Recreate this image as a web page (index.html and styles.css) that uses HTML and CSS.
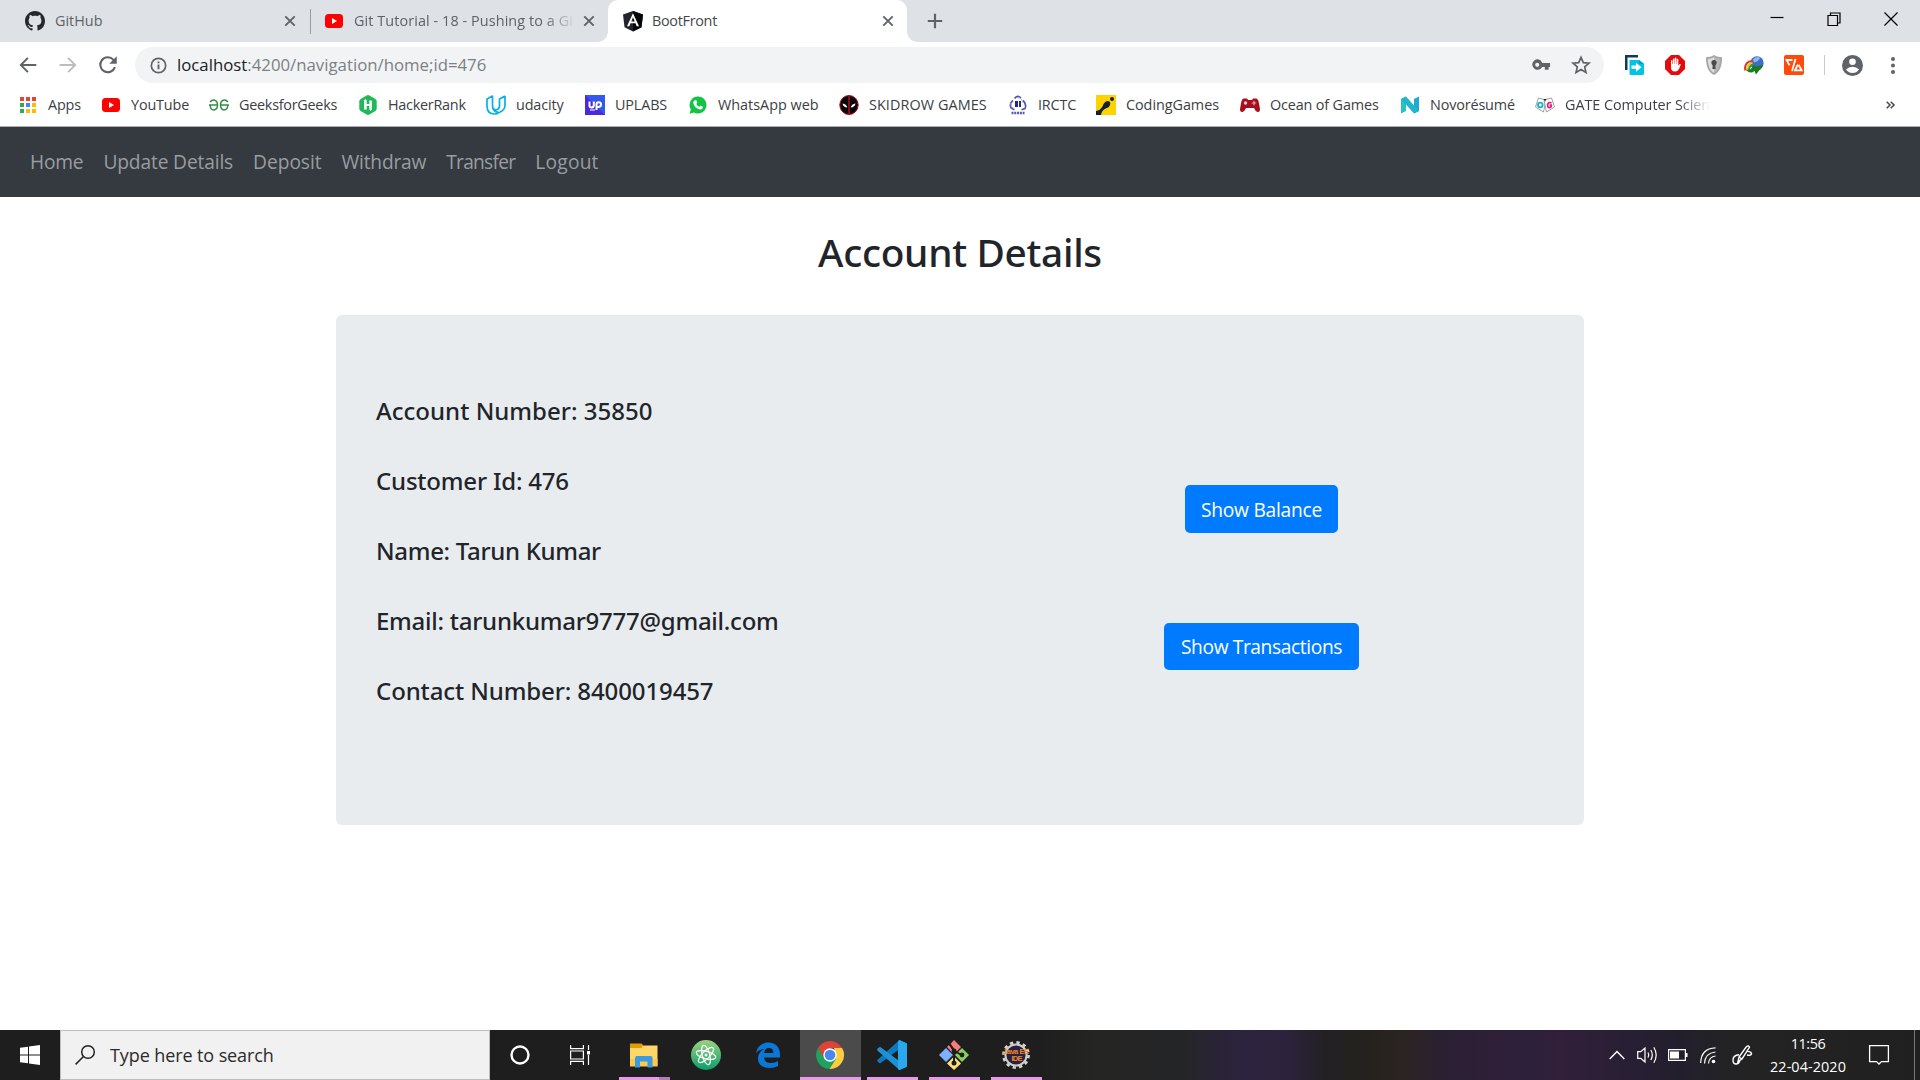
FILE: index.html
```html
<!DOCTYPE html>
<html lang="en">
<head>
<meta charset="utf-8">
<title>BootFront</title>
<link rel="stylesheet" href="styles.css">
</head>
<body>
<header class="browser">
  <div class="tabstrip">
    <div class="tab tab-github">
      <svg class="i20" viewBox="0 0 16 16"><path fill="#24292e" d="M8 0C3.58 0 0 3.58 0 8c0 3.54 2.29 6.53 5.47 7.59.4.07.55-.17.55-.38 0-.19-.01-.82-.01-1.49-2.01.37-2.53-.49-2.69-.94-.09-.23-.48-.94-.82-1.13-.28-.15-.68-.52-.01-.53.63-.01 1.08.58 1.23.82.72 1.21 1.87.87 2.33.66.07-.52.28-.87.51-1.07-1.78-.2-3.64-.89-3.64-3.95 0-.87.31-1.59.82-2.15-.08-.2-.36-1.02.08-2.12 0 0 .67-.21 2.2.82.64-.18 1.32-.27 2-.27s1.36.09 2 .27c1.53-1.04 2.2-.82 2.2-.82.44 1.1.16 1.92.08 2.12.51.56.82 1.27.82 2.15 0 3.07-1.87 3.75-3.65 3.95.29.25.54.73.54 1.48 0 1.07-.01 1.93-.01 2.2 0 .21.15.46.55.38A8 8 0 0 0 16 8c0-4.42-3.58-8-8-8z"/></svg>
      <span class="tab-title">GitHub</span>
      <svg class="close" viewBox="0 0 12 12"><path d="M1.3 1.3l9.4 9.4M10.700 1.300l-9.400 9.400"/></svg>
    </div>
    <div class="tab tab-video">
      <svg class="i20" viewBox="0 0 20 20"><rect x="1" y="3" width="18" height="14" rx="3.500" fill="#f00"/><path fill="#fff" d="M8 7l5 3-5 3z"/></svg>
      <span class="tab-title fade">Git Tutorial - 18 - Pushing to a Gi</span>
      <svg class="close" viewBox="0 0 12 12"><path d="M1.3 1.3l9.4 9.4M10.700 1.300l-9.400 9.400"/></svg>
    </div>
    <div class="tab tab-active">
      <svg class="i20" viewBox="0 0 20 20"><path fill="#23252d" d="M10 0l10 3.400-1.500 12.800L10 20.500 1.500 16.200 0 3.400z"/><path fill="#05060a" d="M10 0l10 3.400-1.500 12.800L10 20.500z"/><path fill="#fff" fill-rule="evenodd" d="M10 2.300l6 13h-2.300l-1.200-3h-5l-1.200 3H4zM10 6.300l-1.700 4.200h3.400z"/></svg>
      <span class="tab-title">BootFront</span>
      <svg class="close" viewBox="0 0 12 12"><path d="M1.3 1.3l9.4 9.4M10.700 1.300l-9.400 9.400"/></svg>
    </div>
    <svg class="newtab" viewBox="0 0 16 16"><path d="M8 .8v14.400M.8 8h14.400" stroke="#5f6368" stroke-width="2.200"/></svg>
    <div class="window-buttons">
      <svg viewBox="0 0 14 14"><path d="M.5 5.500h13"/></svg>
      <svg viewBox="0 0 14 14"><path d="M1 3.500h9.500v10H1zM3.500 3.500V1h9.500v10h-2.500"/></svg>
      <svg viewBox="0 0 14 14"><path d="M.5.5l13 13M13.500.5l-13 13"/></svg>
    </div>
  </div>

  <div class="toolbar">
    <div class="nav-icons">
      <svg viewBox="0 0 24 24"><path fill="#5f6368" d="M22 10.800H6.200l6.500-6.500L11 2.600 1.800 12l9.200 9.400 1.700-1.700-6.500-6.500H22z"/></svg>
      <svg viewBox="0 0 24 24"><path fill="#babcbe" d="M2 10.800h15.800l-6.500-6.500L13 2.600l9.200 9.400-9.200 9.400-1.700-1.700 6.500-6.500H2z"/></svg>
      <svg viewBox="0 0 24 24"><path fill="none" stroke="#5f6368" stroke-width="2.500" d="M20.300 14.500A9 9 0 1 1 18.600 5.800L21 8.300"/><path fill="#5f6368" d="M22.500 1.500v9h-9z"/></svg>
    </div>
    <div class="omnibox">
      <svg class="info" viewBox="0 0 18 18"><circle cx="9" cy="9" r="7.600" fill="none" stroke="#5f6368" stroke-width="1.800"/><path d="M9 8v5M9 4.700v2" stroke="#5f6368" stroke-width="2"/></svg>
      <span class="url"><b>localhost</b>:4200/navigation/home;id=476</span>
      <svg class="key" viewBox="0 0 20 12"><path fill="#5f6368" fill-rule="evenodd" d="M5.500 0a5.500 5.500 0 0 1 5.200 4H19v4h-1.500v3h-4V8h-2.800A5.500 5.500 0 1 1 5.500 0zm0 3.600a2.200 2.200 0 1 0 0 4.400 2.200 2.200 0 0 0 0-4.400z"/></svg>
      <svg class="star" viewBox="0 0 20 20"><path fill="none" stroke="#5f6368" stroke-width="1.700" d="M10 2.300l2.300 5.300 5.700.5-4.300 3.800 1.300 5.600-5-3-5 3 1.300-5.600L2 8.100l5.700-.5z"/></svg>
    </div>
    <div class="extensions">
      <svg viewBox="0 0 20 20"><path fill="#0b3b5e" d="M0 0h13v2.500H2.500V15H0z"/><path fill="#00c3e6" d="M4.500 5H14l5 4v9.500a1.500 1.500 0 0 1-1.500 1.500H6a1.500 1.500 0 0 1-1.500-1.500z"/><path fill="#00a0c8" d="M14 5l5 4h-5z"/><path fill="#fff" d="M6.500 10.500H11V7.700l5.500 4.500-5.500 4.500v-2.900H6.500z"/></svg>
      <svg viewBox="0 0 20 20"><path fill="#e60b0b" d="M6 0h8l6 6v8l-6 6H6l-6-6V6z"/><path fill="#fff" d="M6 5.500q.7-.8 1.400 0V9h.5V4q.8-.9 1.500 0v4.700h.4V3q.8-.9 1.600 0v5.800h.4V4.300q.8-.9 1.500 0V11l1-1.700q1-.8 1.500.2L14 14q-1.200 2.600-4 2.600-4 0-4-4.400z"/></svg>
      <svg viewBox="0 0 20 20"><path fill="#a6a6a6" d="M10 0c3 2 5.500 2 8 2.300C18 11 16 17 10 20 4 17 2 11 2 2.300 4.500 2 7 2 10 0z"/><path fill="#b9b9b9" d="M10 2c2.500 1.500 4 1.600 6.200 1.800C16 10.500 14.500 15 10 18z"/><path fill="#dcdcdc" d="M10 2C7.500 3.500 6 3.600 3.800 3.800 4 10.500 5.500 15 10 18z"/><circle cx="10" cy="7.700" r="2.600" fill="#4b4b4b"/><path fill="#4b4b4b" d="M9 8h2l.7 6H8.300z"/></svg>
      <svg viewBox="0 0 20 20"><circle cx="13" cy="8" r="6.700" fill="#3b6fc4"/><path fill="#8fb7ee" d="M9 4.500q3-3.500 7-2-1 4-6 5z"/><path fill="none" stroke="#d93a2b" stroke-width="2" d="M1.300 15.500C0 8.500 5 5.500 8.500 6.500"/><path fill="none" stroke="#f3c91d" stroke-width="2" d="M3.200 15.500c-.5-5 2-7.500 5.300-7.200"/><path fill="none" stroke="#2e9b3a" stroke-width="2" d="M5 15.500c0-3.500 1.500-5.700 4-5.500"/><path fill="#1c7a1f" d="M1 13.500q4 3.500 7-1l1.500-2.500 3 1.500L19 10q-1 4-3.500 5L12 19.500 10.500 16q-5 4-9.500-2.500z"/></svg>
      <svg viewBox="0 0 20 20"><rect width="20" height="20" rx="2" fill="#ff4a0b"/><path fill="none" stroke="#fff" stroke-width="1.800" d="M8.500 5H2.500l3 5.200M11.500 4L8 16M14 9.500L11 15.300h6.700L14.700 10"/></svg>
    </div>
    <span class="divider"></span>
    <svg class="avatar" viewBox="0 0 21 21"><circle cx="10.500" cy="10.500" r="10.500" fill="#5f6368"/><circle cx="10.500" cy="6.800" r="3.300" fill="#fff"/><path fill="#fff" d="M4 14.500q2.500-2.700 6.500-2.700t6.500 2.700q-2.500 3.600-6.500 3.600T4 14.500z"/></svg>
    <svg class="menu" viewBox="0 0 4 17"><g fill="#5f6368"><circle cx="2" cy="2" r="2"/><circle cx="2" cy="8.500" r="2"/><circle cx="2" cy="15" r="2"/></g></svg>
  </div>

  <div class="bookmarks">
    <div class="bm"><svg viewBox="0 0 20 20"><path fill="#ea4335" d="M2 2h4v4H2zM8 2h4v4H8zM14 2h4v4h-4z"/><path fill="#34a853" d="M2 8h4v4H2zM2 14h4v4H2z"/><path fill="#4285f4" d="M8 8h4v4H8z"/><path fill="#fbbc05" d="M14 8h4v4h-4zM8 14h4v4H8zM14 14h4v4h-4z"/></svg><span>Apps</span></div>
    <div class="bm"><svg viewBox="0 0 20 20"><rect x="1" y="3" width="18" height="14" rx="3.500" fill="#f00"/><path fill="#fff" d="M8 7l5 3-5 3z"/></svg><span>YouTube</span></div>
    <div class="bm"><svg viewBox="0 0 20 20"><path fill="none" stroke="#2f8d46" stroke-width="1.500" d="M0 10h9M11 10h9M1.200 7Q2.500 4.800 5 5q3.500.7 3.500 5T5 15q-3.300 0-3.800-4.500M18.800 7Q17.500 4.800 15 5q-3.500.7-3.500 5t3.500 5q3.300 0 3.800-4.500"/></svg><span>GeeksforGeeks</span></div>
    <div class="bm"><svg viewBox="0 0 20 20"><path fill="#1fb95a" d="M8.600.4q1.400-.8 2.800 0l6 3.500q1.300.8 1.300 2.300v7.600q0 1.500-1.300 2.300l-6 3.500q-1.400.8-2.800 0l-6-3.500q-1.300-.8-1.300-2.300V6.200q0-1.500 1.300-2.300z"/><path fill="#fff" d="M6 5.500L7.300 4l1.400 1.500V9h2.600V5.500h2.600v9L12.700 16l-1.400-1.500V11H8.700v3.500H6z"/></svg><span>HackerRank</span></div>
    <div class="bm"><svg viewBox="0 0 20 20"><path fill="none" stroke="#02b3e4" stroke-width="1.700" stroke-linejoin="round" d="M6.500 1L1 4v7q0 8 7.500 8 2.500 0 4.500-1.500-6.500-.5-6.500-7zM19 1l-5.500 3v7q0 3-3.500 4-1.700-.2-2.700-1.500M19 1v9.500q-.3 5-6 7"/></svg><span>udacity</span></div>
    <div class="bm"><svg viewBox="0 0 20 20"><rect width="20" height="20" fill="#3358f0"/><path fill="#4a2bdc" d="M0 0l20 20H0z"/><path fill="none" stroke="#fff" stroke-width="2" d="M4.500 6.500v4q0 2 2 2t2.300-2v-4M11.500 15V9.500q0-2.200 2.200-2.200T16 9.500t-2.300 2.400-2.200-1"/><path stroke="#fff" d="M5 15h5"/></svg><span>UPLABS</span></div>
    <div class="bm"><svg viewBox="0 0 20 20"><path fill="#12c443" d="M10 1.500a8.500 8.500 0 1 1-4 16L1.500 18.800 2.800 14.500A8.500 8.500 0 0 1 10 1.500z"/><path fill="#fff" d="M6.800 5.300h1.500l1 2.300-1 1.300q1 2 3 2.900l1.200-1.300 2.300 1.200q.2 2.500-2.600 2.800-5.700-.6-7-6.700.2-1.900 1.600-2.500z"/></svg><span>WhatsApp web</span></div>
    <div class="bm"><svg viewBox="0 0 20 20"><ellipse cx="10" cy="10" rx="9.200" ry="9.500" fill="#0a0506" stroke="#a5121c" stroke-width="1"/><path d="M10 1v18" stroke="#a5121c" stroke-width="1.600"/><path fill="#fff" d="M3.500 8.500q4 .5 4.700 4-4-.3-4.700-4zM16.500 8.500q-4 .5-4.700 4 4-.3 4.700-4z"/></svg><span>SKIDROW GAMES</span></div>
    <div class="bm"><svg viewBox="0 0 20 20"><g fill="none" stroke="#5456ae" stroke-width="1.700"><path d="M6.500 3.500q3-4 6.500-.5M5 5.500Q1 8.500 3 13l3.500 1.800M15 5.500q4 3.500 2 8l-3.500 1.300"/></g><path fill="none" stroke="#aaacd6" d="M9 2.500q5 0 5.500 5M3 8q-1 4 3.500 6"/><path fill="#24268e" d="M7 6h3v6H7zM11 6h2v6h-2z"/><path stroke="#5456ae" stroke-width="2.400" stroke-dasharray="2 .8" d="M3.500 18h13"/></svg><span>IRCTC</span></div>
    <div class="bm"><svg viewBox="0 0 20 20"><rect width="20" height="20" fill="#ffd200"/><circle cx="16" cy="4" r="2" fill="#14212b"/><path fill="#14212b" d="M0 20v-4q4-.5 6.500-4.500Q8 6.500 11.500 6q3 0 2.700 3-.5 3.500-4.500 4.500-4 1.500-4.700 6.500z"/></svg><span>CodingGames</span></div>
    <div class="bm"><svg viewBox="0 0 20 20"><path fill="#a80f1c" d="M4 3.500h3l1 1.500h4l1-1.500h3q2 0 2.700 3.500l1.300 7q0 3.500-2.500 3Q15.500 16.500 14 13H6q-1.500 3.500-3.500 4Q0 17.500 0 14l1.300-7Q2 3.500 4 3.500z"/><circle cx="5.500" cy="8" r="1.700" fill="#f0cdd0"/><path stroke="#e3a9ae" stroke-width="1.200" d="M14 5.800v4.400M11.800 8h4.400"/></svg><span>Ocean of Games</span></div>
    <div class="bm"><svg viewBox="0 0 20 20"><path fill="#25c2c0" d="M1 4l5-2.500V16l-5 2.500z"/><path fill="#1fa9d6" d="M14 4l5-2.500V16l-5 2.500z"/><path fill="#23b5cc" d="M1 4l5-2.500 13 14.500-5 2.500z"/></svg><span>Novorésumé</span></div>
    <div class="bm"><svg viewBox="0 0 20 20"><g fill="#fff" stroke="#888" stroke-width=".8"><path d="M3.500 3l7.500 2-2.500 12L.5 12z"/><path d="M16.500 3L9 5l2.500 12 8-5z"/></g><circle cx="5.300" cy="10" r="2.300" fill="none" stroke="#16b3c4" stroke-width="1.800"/><path fill="none" stroke="#e0187f" stroke-width="1.700" d="M16.500 8q-3-1.500-3.800 1.500-.3 3.500 2.200 3 1.800-.6 1.300-2.500h-1.700"/><path fill="#222" d="M8.500 4h3L10 6.500z"/></svg><span class="fade">GATE Computer Scien</span></div>
    <div class="more"><svg viewBox="0 0 9 8"><path fill="none" stroke="#45484c" stroke-width="1.500" d="M.7.7L4 4 .7 7.300M4.700.7L8 4 4.700 7.300"/></svg></div>
  </div>
</header>

<nav class="navbar">
  <a>Home</a><a>Update Details</a><a>Deposit</a><a>Withdraw</a><a>Transfer</a><a>Logout</a>
</nav>

<main class="page">
  <h2>Account Details</h2>
  <section class="card">
    <div class="details">
      <h5>Account Number: 35850</h5>
      <h5>Customer Id: 476</h5>
      <h5>Name: Tarun Kumar</h5>
      <h5>Email: tarunkumar9777@gmail.com</h5>
      <h5>Contact Number: 8400019457</h5>
    </div>
    <div class="actions">
      <button class="btn btn-balance">Show Balance</button>
      <button class="btn btn-transactions">Show Transactions</button>
    </div>
  </section>
</main>

<footer class="taskbar">
  <div class="start"><svg viewBox="0 0 20 20"><path fill="#fff" d="M0 2.800L8 1.700v7.800H0zM9 1.500L20 0v9.500H9zM0 10.500h8v7.800l-8-1.100zM9 10.500h11V20L9 18.500z"/></svg></div>
  <div class="search">
    <svg viewBox="0 0 20 20"><circle cx="13" cy="7" r="6.300" fill="none" stroke="#222" stroke-width="1.500"/><path d="M8.500 11.500L.6 19.400" stroke="#222" stroke-width="1.500"/></svg>
    <span>Type here to search</span>
  </div>
  <div class="cell"><svg class="i20" viewBox="0 0 20 20"><circle cx="10" cy="10" r="8.500" fill="none" stroke="#fff" stroke-width="2.400"/></svg></div>
  <div class="cell"><svg class="i20" viewBox="0 0 20 20"><path fill="none" stroke="#fff" stroke-width="1.200" d="M.6 0v3.600h12.800V0M.6 6h12.800v8H.6zM.6 20v-3.600h12.800V20M18.500 0v5M18.500 10v10"/><path fill="#fff" d="M17 6h3v3.500h-3z"/></svg></div>
  <div class="cell app open split"><svg viewBox="0 0 30 30"><path fill="#e19c08" d="M1 3.500h11.500L14 5v5H1z"/><path fill="#ffd767" d="M1 8h11.500L14 5.500h14.500v20H1z"/><path fill="#fbc94b" d="M1 19h27.500v7.500H1z"/><path fill="#3b9be0" d="M6 27.500V18q0-2 2-2h13.500q2 0 2 2v9.500h-5v-6h-7.500v6z"/></svg></div>
  <div class="cell app"><svg viewBox="0 0 30 30"><defs><linearGradient id="atom" x2="0" y2="1"><stop stop-color="#9bd182"/><stop offset="1" stop-color="#0a9f68"/></linearGradient></defs><circle cx="15" cy="15" r="15" fill="url(#atom)"/><g fill="none" stroke="#fff" stroke-width="1.200"><ellipse cx="15" cy="15" rx="3.700" ry="10" transform="rotate(-15 15 15)"/><ellipse cx="15" cy="15" rx="3.700" ry="10" transform="rotate(45 15 15)"/><ellipse cx="15" cy="15" rx="3.700" ry="10" transform="rotate(105 15 15)"/></g><circle cx="15" cy="15" r="1.500" fill="#fff"/></svg></div>
  <div class="cell app"><svg viewBox="0 0 30 30"><path fill="#0a78d7" fill-rule="evenodd" d="M3 13.500C4 6.500 9 2.500 15.500 2.500 23 2.500 27 8 27 14.500v3H11q.5 5.500 7 5.500 4 0 7-2v5q-3.500 2-8.500 2C9 28 5 24 5 18.500 5 14 7.500 10.500 11.500 9 7 9 4.500 11 3 13.500zM11.200 13h9.300q-.2-5-4.700-5-4 0-4.600 5z"/></svg></div>
  <div class="cell app open chrome"><svg viewBox="0 0 30 30"><path fill="#dc4437" d="M2.900 8A14 14 0 0 1 27.100 8H15L8.900 18.500z"/><path fill="#1da35e" d="M2.900 8a14 14 0 0 0 11.600 21l6.500-10.500H9z"/><path fill="#fdcd40" d="M27.100 8a14 14 0 0 1-12.600 21L21.100 18.500 19 8z"/><circle cx="15" cy="15" r="6.700" fill="#fff"/><circle cx="15" cy="15" r="5.300" fill="#4688f1"/></svg></div>
  <div class="cell app open"><svg viewBox="0 0 30 30"><path fill="#0a79be" d="M22.500 0L30 3.500 3 23.500.3 21.500V20z"/><path fill="#1f8fd6" d="M.3 8.700L3 6.700l27 20L22.500 30 .3 10.500z"/><path fill="#29a8ee" d="M22.500 0L30 3.500v23L22.500 30q-1 0-1.500-1.500V1.500Q21.500 0 22.500 0z"/></svg></div>
  <div class="cell app open"><svg viewBox="0 0 30 30"><path fill="#f77d7d" d="M15 0l7 7-4.500 4.500-6-7.500zM10 5l4.500 6L13 12.500 8 7z"/><path fill="#7fb0ff" d="M7 8l7 7-7 7-7-7z"/><path fill="#86cf60" d="M23 8l7 7-7 7-7-7z"/><path fill="#ffe27c" d="M15 16.500l7 7L15 30l-7-6.500z"/><path fill="none" stroke="#1e1e1e" stroke-width="2" d="M11 4.500l4 6.500v13M15.500 11l7 4"/><g fill="#1e1e1e"><circle cx="15" cy="11" r="2.400"/><circle cx="15" cy="23" r="2.500"/><circle cx="23" cy="15" r="2.400"/></g></svg></div>
  <div class="cell app open"><svg viewBox="0 0 30 30"><circle cx="15" cy="15" r="12.600" fill="none" stroke="#d5d5d5" stroke-width="2.600" stroke-dasharray="3.300 3.300"/><circle cx="15" cy="15" r="10.600" fill="#2a2040" stroke="#cfcfcf" stroke-width="2"/><g fill="#f08a24" font-family="Liberation Sans, sans-serif" font-weight="700" font-size="7.500" text-anchor="middle"><text x="15" y="14" textLength="26">Java EE</text><text x="16" y="21" textLength="11">IDE</text></g></svg></div>
  <div class="tray">
    <svg class="t-chev" viewBox="0 0 16 10"><path d="M.7 9L8 1.500 15.300 9" stroke-width="1.500"/></svg>
    <svg class="t-vol" viewBox="0 0 21 18"><path d="M.7 5.700h3L8 2v14l-4.300-3.700h-3zM11 6.500q1.500 2.500 0 5M13.800 4q3 5 0 10M16.800 1.200q4.800 7.800 0 15.600" stroke-width="1.200"/></svg>
    <svg class="t-bat" viewBox="0 0 20 12"><path d="M.6.6h16.800v10.800H.6z" stroke-width="1.200"/><path fill="#fff" stroke="none" d="M2 2.500h9v7H2zM18 4h1.500v4H18z"/></svg>
    <svg class="t-wifi" viewBox="0 0 16 17"><path d="M.7 16Q1 1.500 15.500.9M4.500 16.500Q5 6 15.500 5M8.500 16.500Q9 9.800 15.500 9" stroke-width="1.200"/><circle cx="13.500" cy="14.500" r="1.800" fill="#fff" stroke="none"/></svg>
    <svg class="t-pen" viewBox="0 0 20 20"><path d="M6 16.500L7 12 14.500 1.500q2-1.300 3 .8L10 14zM7 9.700Q1 10.300 1 15q0 4 3 4t4-4M14 6.500q5-.5 5.500 2 0 2.500-4.500 1.500M7 12l3 2" stroke-width="1.400"/></svg>
    <div class="clock"><span class="time">11:56</span><span>22-04-2020</span></div>
    <svg class="t-note" viewBox="0 0 20 20"><path d="M.6.6h18.800v16H12.500L10 19l-2.500-2.400H.6z" stroke-width="1.300"/></svg>
    <span class="peek"></span>
  </div>
</footer>
</body>
</html>
```
FILE: styles.css
```css
* { box-sizing: border-box; }
body {
  margin: 0;
  width: 1920px;
  height: 1080px;
  overflow: hidden;
  display: flex;
  flex-direction: column;
  background: #fff;
  font-family: "Open Sans", "Noto Sans", sans-serif;
  white-space: nowrap;
}
svg { display: block; flex: none; overflow: visible; }
.i20 { width: 20px; height: 20px; }
.fade {
  -webkit-mask-image: linear-gradient(to right, #000 calc(100% - 32px), transparent);
  mask-image: linear-gradient(to right, #000 calc(100% - 32px), transparent);
}

/* Tab strip */
.browser { flex: none; height: 127px; border-bottom: 1px solid #a9abae; background: #fff; }
.tabstrip { height: 42px; background: #dee1e6; display: flex; }
.tab { height: 42px; display: flex; align-items: center; font-size: 14.4px; color: #5f6368; }
.tab .i20 { margin-right: 10px; }
.tab-title { flex: 1; line-height: 24px; margin-top: -1px; }
.tab-github { width: 310px; padding-left: 25px; padding-right: 14px; position: relative; }
.tab-github::after { content: ""; position: absolute; right: -1px; top: 9px; width: 1px; height: 25px; background: #9a9da1; }
.tab-video { width: 298px; padding-left: 14px; padding-right: 13px; }
.tab-video .tab-title { flex: none; width: 222px; margin-right: 7px; letter-spacing: .09px; }
.tab-active {
  width: 299px;
  padding-left: 15px;
  padding-right: 13px;
  background: #fff;
  border-radius: 10px 10px 0 0;
  position: relative;
  color: #45484c;
  letter-spacing: -.3px;
}
.tab-active .i20 { margin-right: 9px; }
.tab-active::before, .tab-active::after { content: ""; position: absolute; bottom: 0; width: 10px; height: 10px; }
.tab-active::before { left: -10px; background: radial-gradient(circle at 0 0, transparent 9.5px, #fff 10px); }
.tab-active::after { right: -10px; background: radial-gradient(circle at 100% 0, transparent 9.5px, #fff 10px); }
.close { width: 12px; height: 12px; stroke: #5f6368; stroke-width: 1.900; }
.newtab { width: 16px; height: 16px; margin: 13px 0 0 20px; }
.window-buttons { margin-left: auto; display: flex; gap: 43px; padding: 12px 22px 0 0; }
.window-buttons svg { width: 14px; height: 14px; fill: none; stroke: #000; stroke-width: 1.200; }

/* Toolbar */
.toolbar { height: 46px; display: flex; align-items: center; padding: 0 25px 0 18px; }
.nav-icons { display: flex; gap: 20px; width: 117px; }
.nav-icons svg { width: 20px; height: 20px; }
.omnibox { width: 1469px; height: 36px; border-radius: 18px; background: #f1f3f4; display: flex; align-items: center; padding: 0 13px 0 15px; }
.info { width: 17px; height: 17px; }
.url { margin-left: 10px; flex: 1; font-size: 16.800px; line-height: 24px; color: #7c8085; }
.url b { font-weight: 400; color: #202124; }
.key { width: 19px; height: 12px; margin-right: 20px; }
.star { width: 20px; height: 20px; }
.extensions { display: flex; gap: 19.700px; margin-left: 21px; }
.extensions svg { width: 20px; height: 20px; }
.divider { width: 1px; height: 20px; margin: 0 17px 0 20px; background: #c8cacd; }
.avatar { width: 21px; height: 21px; }
.menu { width: 4px; height: 17px; margin-left: auto; }

/* Bookmarks */
.bookmarks {
  height: 34px;
  padding-left: 18px;
  display: grid;
  grid-template-columns: 83px 108px 149px 128px 99px 103px 151px 169px 88px 144px 160px 135px 171px 1fr;
  align-items: center;
  font-size: 14.400px;
  color: #3c4043;
}
.bm { display: flex; align-items: center; }
.bm svg { width: 20px; height: 20px; margin-right: 10px; }
.bm span { line-height: 24px; margin-top: -1px; letter-spacing: -.15px; }
.bm:nth-child(3) span, .bm:nth-child(4) span { letter-spacing: -.26px; }
.bm:nth-child(7) span { letter-spacing: 0; }
.bm:nth-child(8) span { letter-spacing: .08px; }
.bm:nth-child(10) span { letter-spacing: -.05px; }
.bm:nth-child(13) span { letter-spacing: -.05px; }
.more { justify-self: end; padding-right: 25px; }
.more svg { width: 9px; height: 8px; }

/* Site navigation */
.navbar { flex: none; height: 70px; padding: 0 20px; background: #343a40; display: flex; align-items: center; }
.navbar a { padding: 0 10px; font-size: 19.200px; line-height: 30px; color: #9a9da0; letter-spacing: -.2px; }
.navbar a:nth-child(2) { letter-spacing: -.15px; }
.navbar a:nth-child(3) { letter-spacing: -.05px; }
.navbar a:nth-child(5) { letter-spacing: -.75px; }
.navbar a:nth-child(6) { letter-spacing: .2px; }

/* Account page */
.page { flex: 1; display: flex; flex-direction: column; align-items: center; color: #212529; font-family: "Noto Sans", "Open Sans", sans-serif; }
h2, h5 { margin: 0; font-weight: 500; }
h2 { margin-top: 31px; font-size: 38.800px; line-height: 48px; letter-spacing: -.3px; }
.card { width: 1248px; height: 510px; margin-top: 39px; padding: 81px 40px 0; border-radius: 6px; background: #e9ecef; display: flex; }
.details { width: 603px; display: flex; flex-direction: column; gap: 40px; }
h5 { font-size: 24px; line-height: 30px; letter-spacing: -.2px; }
h5:nth-child(1) { letter-spacing: .02px; }
h5:nth-child(3) { letter-spacing: -.31px; }
h5:nth-child(4) { letter-spacing: -.25px; }
h5:nth-child(5) { letter-spacing: -.11px; }
.actions { flex: 1; padding-top: 89px; display: flex; flex-direction: column; align-items: center; gap: 90px; }
.btn { height: 48px; padding: 1px 0 0; border: 0; border-radius: 5px; background: #007bff; color: #fff; font: 19.200px/30px "Open Sans", "Noto Sans", sans-serif; }
.btn-balance { width: 153px; letter-spacing: -.25px; }
.btn-transactions { width: 195px; height: 47px; letter-spacing: -.39px; }

/* Taskbar */
.taskbar {
  flex: none;
  height: 50px;
  display: flex;
  background: linear-gradient(to right, #1e1e1e 0, #1e1e1e 1040px, #252523 1100px, #242527 1180px, #2d2340 1250px, #2c223a 1290px, #222024 1325px, #24221d 1365px, #2b2422 1405px, #2a2033 1445px, #2f1f38 1500px, #2c203a 1530px, #321f3a 1560px, #281f34 1630px, #221f2c 1680px, #232323 1740px, #202020 1920px);
}
.start { width: 60px; padding: 15px 0 0 20px; }
.start svg { width: 20px; height: 20px; }
.search { width: 430px; border: 1px solid #bdbdbd; background: #f1f1f1; display: flex; align-items: center; padding-left: 14px; color: #2b2b2b; }
.search svg { width: 20px; height: 20px; }
.search span { margin-left: 15px; font-size: 18px; letter-spacing: -.1px; }
.cell { width: 60px; display: flex; align-items: center; justify-content: center; }
.app { width: 62px; }
.app:nth-child(5) { margin-left: 3px; }
.app svg { width: 30px; height: 30px; }
.open { background: linear-gradient(#e59bea, #e59bea) center bottom / 51px 3px no-repeat; }
.split { background: linear-gradient(to right, #e59bea 40px, #b47cba 40px) center bottom / 51px 3px no-repeat; }
.chrome { background: linear-gradient(#e59bea, #e59bea) center bottom / 61px 3px no-repeat, linear-gradient(#4b4b4b, #4b4b4b) center / 61px 50px no-repeat; }
.tray { margin-left: auto; display: flex; align-items: center; }
.tray svg { fill: none; stroke: #fff; }
.t-chev { width: 16px; height: 10px; margin-right: 12px; }
.t-vol { width: 21px; height: 18px; margin-right: 10px; }
.t-bat { width: 20px; height: 12px; margin-right: 12px; }
.t-wifi { width: 16px; height: 17px; margin-right: 16px; }
.t-pen { width: 20px; height: 20px; margin-right: 17px; }
.clock { width: 78px; display: flex; flex-direction: column; align-items: center; color: #fff; font-size: 14.400px; line-height: 23px; margin-top: -1px; letter-spacing: .09px; }
.time { letter-spacing: -.4px; }
.t-note { width: 20px; height: 20px; margin-left: 22px; }
.peek { width: 1px; height: 50px; margin: 0 5px 0 25px; background: #777; }
```
